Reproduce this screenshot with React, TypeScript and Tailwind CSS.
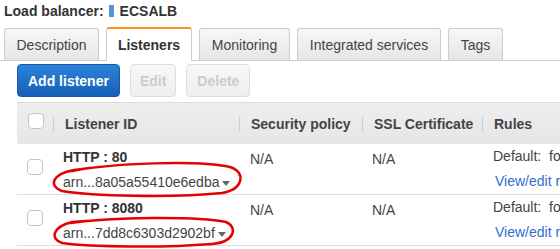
import React from 'react';

const tabs = [
  { label: 'Description', w: 'w-[95px]' },
  { label: 'Listeners', w: 'w-[86px]', active: true },
  { label: 'Monitoring', w: 'w-[91px]' },
  { label: 'Integrated services', w: 'w-[144px]' },
  { label: 'Tags', w: 'w-[55px]' },
];

const listeners = [
  { proto: 'HTTP : 80', arn: 'arn...8a05a55410e6edba' },
  { proto: 'HTTP : 8080', arn: 'arn...7dd8c6303d2902bf' },
];

const Checkbox: React.FC = () => (
  <span className="block h-[16px] w-[16px] rounded-[4px] border border-[#c4c4c4] bg-white" />
);

const Caret: React.FC = () => (
  <svg width="8" height="5" viewBox="0 0 8 5" className="ml-[3px] mt-[2px]">
    <path d="M0 0 L8 0 L4 5 Z" fill="#666" />
  </svg>
);

const App: React.FC = () => {
  return (
    <div className="relative h-[249px] w-[560px] overflow-hidden bg-white font-['Liberation_Sans',Arial,sans-serif] text-[14px] leading-4 text-[#444]">
      {/* Title */}
      <div className="flex items-center pl-[4px] pt-[3px] font-bold text-[#333]">
        <span>Load balancer:</span>
        <span className="ml-[5px] h-[12px] w-[5px] shrink-0 bg-[#5594d4]" />
        <span className="ml-[6px]">ECSALB</span>
      </div>

      {/* Tabs */}
      <div className="mt-[8px] flex items-end gap-[7px] border-b border-[#cccccc] pl-[4px]">
        {tabs.map((t) =>
          t.active ? (
            <div
              key={t.label}
              className={`${t.w} -mb-px flex h-[34px] items-center justify-center rounded-t-[3px] border-x border-t-2 border-x-[#cccccc] border-t-[#f7981d] bg-white pb-px font-bold text-[#333]`}
            >
              {t.label}
            </div>
          ) : (
            <div
              key={t.label}
              className={`${t.w} flex h-[32px] items-center justify-center rounded-t-[3px] border border-b-0 border-[#cccccc] bg-gradient-to-b from-[#f7f7f7] to-[#e6e6e6] text-[#444]`}
            >
              {t.label}
            </div>
          )
        )}
      </div>

      {/* Actions */}
      <div className="ml-[17px] mt-[3px] flex gap-[10px] font-bold">
        <button className="h-[33px] rounded-[4px] border border-[#1a5aa6] bg-gradient-to-b from-[#2c82da] to-[#1660b9] px-[10px] text-white">
          Add listener
        </button>
        <button className="h-[33px] rounded-[4px] border border-[#dddddd] bg-gradient-to-b from-[#f8f8f8] to-[#eeeeee] px-[9px] text-[#cccccc]">
          Edit
        </button>
        <button className="h-[33px] rounded-[4px] border border-[#dddddd] bg-gradient-to-b from-[#f8f8f8] to-[#eeeeee] px-[10px] text-[#cccccc]">
          Delete
        </button>
      </div>

      {/* Table */}
      <div className="ml-[17px] mt-[5px] w-[600px]">
        <div className="grid h-[42px] grid-cols-[36px_186px_123px_120px_1fr] border-t border-[#dadada] bg-gradient-to-b from-[#eeeeee] to-[#e6e6e6] font-bold text-[#444]">
          <div className="flex items-start pl-[11px] pt-[10px]">
            <Checkbox />
          </div>
          {['Listener ID', 'Security policy', 'SSL Certificate', 'Rules'].map((h) => (
            <div key={h} className="flex items-center">
              <span className="h-[16px] w-px shrink-0 bg-[#cfcfcf]" />
              <span className="pl-[11px]">{h}</span>
            </div>
          ))}
        </div>

        {listeners.map((l) => (
          <div
            key={l.proto}
            className="grid grid-cols-[36px_186px_123px_120px_1fr] border-b border-[#dddddd]"
          >
            <div className="pl-[10px] pt-[15px]">
              <Checkbox />
            </div>
            <div className="flex flex-col gap-[9px] pb-[4px] pl-[10px] pt-[5px]">
              <span className="font-bold text-[#333]">{l.proto}</span>
              <span className="flex items-center whitespace-nowrap">
                {l.arn}
                <Caret />
              </span>
            </div>
            <div className="pl-[11px] pt-[7px]">N/A</div>
            <div className="pl-[10px] pt-[7px]">N/A</div>
            <div className="flex flex-col gap-[9px] pl-[11px] pt-[4px] whitespace-nowrap">
              <span>Default:&nbsp; forward to ECSTG</span>
              <span className="pl-[2px] text-[#2f6fcf]">View/edit rules</span>
            </div>
          </div>
        ))}
      </div>

      {/* Hand-drawn annotations */}
      <svg
        className="pointer-events-none absolute left-0 top-0"
        width="560"
        height="249"
        viewBox="0 0 560 249"
      >
        <path
          d="M72 171 C 112 163, 198 160, 230 167 C 246 172, 244 189, 222 193 C 172 198, 92 196, 62 191 C 48 186, 52 174, 74 170 L 90 168"
          fill="none"
          stroke="#e60000"
          strokeWidth="2.5"
          strokeLinecap="round"
        />
        <path
          d="M70 223 C 112 217, 196 216, 226 222 C 238 227, 235 242, 212 244 C 162 248, 92 247, 62 243 C 50 239, 52 227, 72 222 L 86 221"
          fill="none"
          stroke="#e60000"
          strokeWidth="2.5"
          strokeLinecap="round"
        />
      </svg>
    </div>
  );
};

export default App;
